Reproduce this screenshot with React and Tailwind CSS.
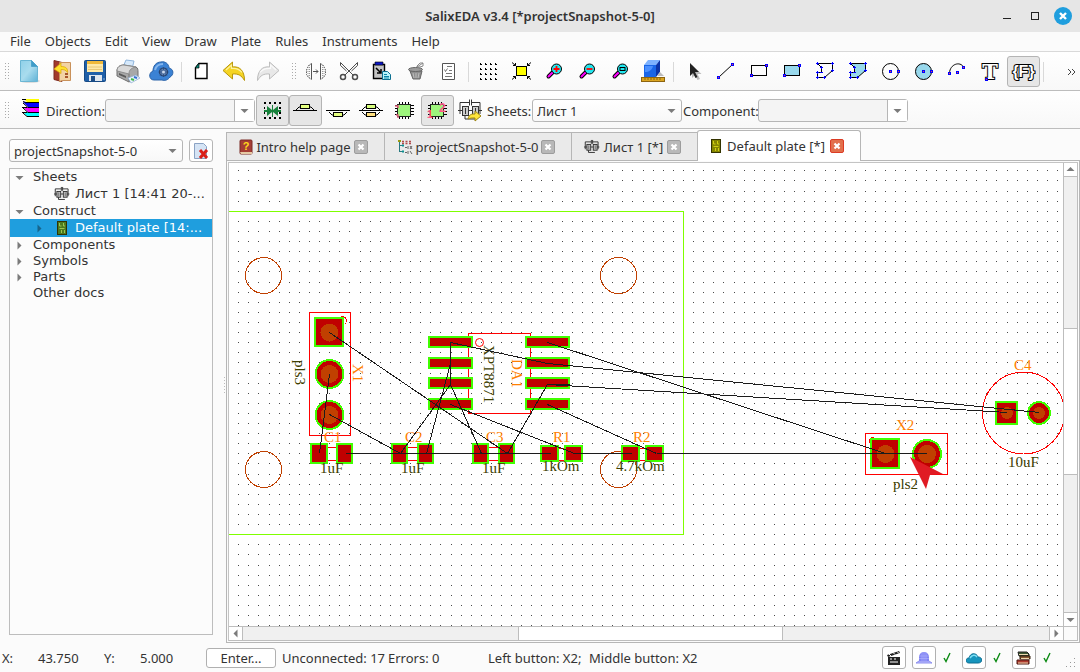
import { useState } from 'react'
import clsx from 'clsx'

const MENU = ['File', 'Objects', 'Edit', 'View', 'Draw', 'Plate', 'Rules', 'Instruments', 'Help']

function Icon({ children, className = '' }) {
  return (
    <svg width="25" height="25" viewBox="0 0 25 25" fill="none" className={clsx('shrink-0', className)} aria-hidden="true">
      {children}
    </svg>
  )
}

/* ---------- file icons ---------- */

const NewIcon = () => (
  <Icon>
    <defs>
      <linearGradient id="newDoc" x1="0" y1="0" x2="1" y2="1">
        <stop offset="0" stopColor="#8fd0e8" />
        <stop offset=".5" stopColor="#a9dcee" />
        <stop offset="1" stopColor="#5fb2d6" />
      </linearGradient>
    </defs>
    <ellipse cx="13" cy="22" rx="10" ry="2" fill="#ddd" />
    <path d="M3.500 1.500h11l6 6v15h-17z" fill="url(#newDoc)" stroke="#6bb6d4" />
    <path d="M14.500 1.500v6h6z" fill="#3f9cc8" stroke="#4ca4cc" />
  </Icon>
)

const OpenIcon = () => (
  <Icon>
    <path d="M4 1.500l8 2v19l-8-2z" fill="#a33a2c" stroke="#7d281e" />
    <path d="M9.500 3.500h11v18h-8l-3 1z" fill="#f2d3a4" stroke="#c9915a" />
    <path d="M15 15h3M15 18h3" stroke="#a8552c" strokeWidth="2" />
    <path d="M4 10l7-6v3.500c5 0 7 2 6.500 6-1.500-2.500-3.500-3-6.500-3v4z" fill="#ffe12e" stroke="#d9a400" strokeWidth=".7" />
  </Icon>
)

const SaveIcon = () => (
  <Icon>
    <rect x="1.500" y="1.500" width="21" height="21" rx="1" fill="#1f5fa8" stroke="#174a85" />
    <rect x="4" y="2" width="16" height="11" fill="#ffe9a8" />
    <rect x="4" y="2" width="16" height="3" fill="#f0b93a" />
    <path d="M5 8h14M5 10.500h14" stroke="#e8c878" />
    <rect x="6" y="16" width="13" height="6" fill="#dfe6ef" />
    <rect x="8" y="17" width="4" height="5" fill="#1c4d87" />
    <path d="M20.500 20h1" stroke="#fff" />
  </Icon>
)

const PrintIcon = () => (
  <Icon>
    <path d="M7 8l3-7 8 1-2 8z" fill="#d6e9fb" stroke="#8fb5dc" />
    <path d="M1 12c0-4 3-6 7-6l12 2c2 1 2 3 2 5v5l-9 5-12-6z" fill="#a8a8a8" stroke="#6f6f6f" />
    <path d="M1 12c0-4 3-6 7-6l12 2c-5 1-7 3-7 7z" fill="#d9d9d9" stroke="#8c8c8c" />
    <path d="M13 15v8" stroke="#777" />
    <path d="M3 14l7 3v2l-7-3z" fill="#5a5a5a" />
    <path d="M12 19l8-3 4 3-9 5z" fill="#eef6ff" stroke="#89a9cf" strokeWidth=".7" />
    <path d="M15 20l3 1" stroke="#44b84a" strokeWidth="2" />
    <path d="M18 18l3 1" stroke="#3070d0" strokeWidth="2" />
  </Icon>
)

const CloudIcon = () => (
  <Icon>
    <path d="M5 21C0 21-1 14 4 12 4 7 7 3 12 3c4-1 8 2 8 6 5 1 5 7 1 9-2 3-5 4-8 3z" fill="#3b82d4" stroke="#2a62a8" />
    <path d="M6 11c1-4 4-6 8-6" stroke="#84b6ee" strokeWidth="2" />
    <circle cx="14.500" cy="13" r="4" fill="#5f83b4" stroke="#24406c" strokeWidth="1.200" />
    <path d="M14.500 8v10M9.500 13h10M11 9.500l7 7M18 9.500l-7 7" stroke="#2b4a7c" strokeWidth=".8" />
    <circle cx="14.500" cy="13" r="1.500" fill="#c8d8ee" />
  </Icon>
)

const PageIcon = () => (
  <Icon>
    <path d="M10 4.500h8v15H6.500V9z" fill="#fff" stroke="#000" strokeWidth="1.400" />
    <path d="M10 4v5H6z" fill="#0b8a7a" stroke="#000" strokeWidth=".7" />
  </Icon>
)

const arrowPath = 'M1 11.500L10.500 3v5c7-1 12 3.500 12 13.500-3-5-6-7-12-6.500v5z'
const UndoIcon = () => (
  <Icon>
    <path d={arrowPath} fill="#f5d423" stroke="#b8960c" />
    <path d="M4 11l5.500-5v3.500c5-.5 8.500 1.500 10.500 4" stroke="#fdf2a0" strokeWidth="1.200" />
  </Icon>
)
const RedoIcon = () => (
  <Icon className="-scale-x-100">
    <path d={arrowPath} fill="#e8e8e8" stroke="#bcbcbc" />
    <path d="M4 11l5.500-5v3.500c5-.5 8.500 1.500 10.500 4" stroke="#fafafa" strokeWidth="1.200" />
  </Icon>
)

/* ---------- edit icons ---------- */

const JoinIcon = () => (
  <Icon>
    <path d="M7.500 4.500v16M16.500 4.500v16" stroke="#555" />
    <path d="M7.500 4.500l-3 2-2 4v5l2 3 3 2M16.500 4.500l3 2 2 4v5l-2 3-3 2" stroke="#555" strokeDasharray="1.500 1" />
    <path d="M4 8v9M5.500 6v13M20 8v9M18.500 6v13" stroke="#999" strokeDasharray="1 1" />
    <path d="M9 12.500h5M12 10.500l2 2-2 2" stroke="#555" />
  </Icon>
)

const CutIcon = () => (
  <Icon>
    <path d="M3.500 3.500L16 16M20.500 3.500L8 16M3.500 3.500v3l6 5.500M20.500 3.500v3l-6 5.500" stroke="#4d4d4d" />
    <circle cx="6" cy="18" r="2.500" stroke="#4d4d4d" strokeWidth="1.500" />
    <circle cx="18" cy="18" r="2.500" stroke="#4d4d4d" strokeWidth="1.500" />
  </Icon>
)

const PasteIcon = () => (
  <Icon>
    <path d="M3.500 5.500h11v14h-11z" fill="#c4c4c4" stroke="#000" strokeWidth="1.400" />
    <path d="M5 3h8v3H5z" fill="#0d18c8" stroke="#000" strokeWidth=".6" />
    <path d="M6 9l5 5M11 10v4H7" stroke="#000" strokeWidth="1.500" />
    <path d="M12.500 12.500h5l3 3v5h-8z" fill="#b8f4fa" stroke="#0c6f90" />
    <path d="M14 15.500h3M14 17.500h5M14 19h5" stroke="#0a86a8" />
  </Icon>
)

const TrashIcon = () => (
  <Icon>
    <path d="M7 12h12l-2 8h-7z" fill="#8f8f8f" stroke="#666" />
    <ellipse cx="12.500" cy="10.500" rx="7" ry="2" fill="#9c9c9c" stroke="#666" />
    <path d="M10 14l1 5M13 14v5M16 14l-1 5" stroke="#bcbcbc" />
    <path d="M14 7l3-3h3v3l-3 1h-3zM14 8l6-4" fill="#fff" stroke="#888" />
  </Icon>
)

const PropsIcon = () => (
  <Icon>
    <path d="M6.500 4.500h12v16h-12z" fill="#fff" stroke="#555" />
    <path d="M11 7.500h5M13 11.500h3M10 14.500h6M9 17.500h7" stroke="#777" />
    <path d="M8.500 10.500l1 2 2-3" stroke="#555" strokeWidth=".8" />
  </Icon>
)

/* ---------- view icons ---------- */

const GridIcon = () => (
  <Icon>
    {[4, 9, 14, 19].map((y) =>
      [4, 9, 14, 19].map((x) => <path key={x + '-' + y} d={`M${x} ${y}h1v1h1v1h-2z`} fill="#000" />)
    )}
  </Icon>
)

const FitIcon = () => (
  <Icon>
    <rect x="7.500" y="7.500" width="10" height="9" fill="#ffff00" stroke="#000" />
    <path d="M3 3.500l3.500 3M22 3.500l-3.500 3M3 20.500l3.500-3M22 20.500l-3.500-3M6.500 4v2.500H4M18.500 4v2.500H21M6.500 20v-2.500H4M18.500 20v-2.500H21" stroke="#000" />
  </Icon>
)

function LensIcon({ sign }) {
  return (
    <Icon>
      <path d="M6.500 17.500l4-4" stroke="#000" strokeWidth="4" strokeLinecap="round" />
      <path d="M6.500 17.500l4-4" stroke="#ff00ff" strokeWidth="2" strokeLinecap="round" />
      <circle cx="14.500" cy="10" r="5" fill="#21e6ee" stroke="#000" />
      {sign === 'fit' ? (
        <rect x="12" y="8.500" width="5" height="3" fill="#21e6ee" stroke="#000" />
      ) : (
        <path d={sign === 'in' ? 'M11.500 10h6M14.500 7v6' : 'M11.500 10h6'} stroke="#f00" strokeWidth="1.800" />
      )}
    </Icon>
  )
}

const CubeIcon = () => (
  <Icon>
    <path d="M3 6h12v12H3z" fill="#1a66e8" />
    <path d="M3 6l4-5h12l-4 5z" fill="#7db2ff" />
    <path d="M15 6l4-5v12l-4 5z" fill="#0c34a8" />
    <path d="M4 7h8c-1 4-4 6-8 6z" fill="#4b90ff" />
    <path d="M19 13l4 4h-7z" fill="#bbb" />
    <rect x=".5" y="18.500" width="23" height="4" fill="#dba521" stroke="#8d6410" />
    <path d="M4 19v2M7 19v2M10 19v2M13 19v2M16 19v2M19 19v2" stroke="#7a5408" strokeWidth=".8" />
  </Icon>
)

/* ---------- drawing tools ---------- */

// Узел фигуры: красная точка в синей рамке
function Node({ x, y }) {
  return (
    <>
      <rect x={x - 1} y={y - 1} width="3" height="3" fill="#0000ff" />
      <rect x={x} y={y} width="1" height="1" fill="#ff4040" />
    </>
  )
}

const CursorIcon = () => (
  <Icon>
    <path d="M11 6v13l3-3 2.500 5 2.500-1-2.500-5h4z" fill="#bbb" />
    <path d="M9 4v13l3-3 2.500 5 2-1-2.500-5h4z" fill="#222" />
  </Icon>
)

const LineIcon = () => (
  <Icon>
    <path d="M5 18L19 5" stroke="#000" />
    <Node x={4} y={18} />
    <Node x={18} y={5} />
  </Icon>
)

function RectIcon({ fill }) {
  return (
    <Icon>
      <rect x="4.500" y="6.500" width="15" height="10" fill={fill} stroke="#000" />
      <Node x={4} y={16} />
      <Node x={19} y={6} />
    </Icon>
  )
}

function PolyIcon({ fill }) {
  return (
    <Icon>
      <path d="M4.500 4.500h15v7l-8 7h-7v-5h4v-5z" fill={fill} stroke="#000" />
      <path d="M3 4.500h3M4.500 3v3M18 4.500h3M19.500 3v3M18 11.500h3M19.500 10v3M10 18.500h3M11.500 17v3M3 18.500h3M4.500 17v3M3 13.500h3M4.500 12v3M7 13.500h3M7 8.500h3M8.500 7v3" stroke="#0000ff" />
    </Icon>
  )
}

function CircleIcon({ fill }) {
  return (
    <Icon>
      <circle cx="11.500" cy="12.500" r="8" fill={fill} stroke="#000" />
      <Node x={11} y={12} />
      <Node x={19} y={12} />
    </Icon>
  )
}

const ArcIcon = () => (
  <Icon>
    <path d="M4.500 14C5 5 15 2 18.500 8" stroke="#000" />
    <Node x={4} y={14} />
    <Node x={12} y={13} />
    <Node x={18} y={8} />
  </Icon>
)

const TextIcon = () => (
  <Icon>
    <text x="12" y="20" textAnchor="middle" fill="#fff" stroke="#000" strokeWidth="2" paintOrder="stroke" className="font-['DejaVu_Serif'] text-[21px] font-bold">T</text>
    <Node x={8} y={20} />
  </Icon>
)

const FunctionIcon = () => (
  <Icon>
    <text x="12.500" y="18" textAnchor="middle" fill="#fff" stroke="#000" strokeWidth="2" paintOrder="stroke" className="font-['Liberation_Sans'] text-[16px] font-bold">{'{F}'}</text>
  </Icon>
)

/* ---------- plate icons ---------- */

const LayersIcon = () => (
  <Icon>
    <path d="M5 1h15v3H8z" fill="#ffff00" />
    <path d="M4 4h16v5H9z" fill="#0000ff" />
    <path d="M4 9h16v5H9z" fill="#ff00ff" />
    <path d="M4 14h16v5H9z" fill="#00ffff" />
    <path d="M3 1.500h4M4 3.500l3 1h13M4 5l5 4.500h11M3 9.500h5M4 10l5 4.500h11M3 14.500h5M4 15l4 3.500h12" stroke="#000" />
  </Icon>
)

const SnapIcon = () => (
  <Icon>
    <path d="M4 4h2v2h-2zM9 4h2v2h-2zM14 4h2v2h-2zM19 4h2v2h-2zM4 9h1v2h-1zM19 9h2v2h-2zM4 14h1v2h-1zM19 14h2v2h-2zM4 19h2v2h-2zM9 19h2v2h-2zM14 19h2v2h-2zM19 19h2v2h-2z" fill="#000" />
    <path d="M7 8l5 4V7h1v5l5-4v10l-5-4v5h-1v-5l-5 4v-4H4v-2h3zM18 12h3v2h-3z" fill="#16803a" />
  </Icon>
)

const topPart = 'M0 12.500h24M3 12l3-3h2M21 12l-3-3h-2'
const botPart = 'M3 14l3 3h2M21 14l-3 3h-2'
const TopSideIcon = () => (
  <Icon>
    <path d={topPart} stroke="#000" />
    <rect x="7.500" y="6.500" width="9" height="4" fill="#e4ff80" stroke="#000" />
  </Icon>
)
const BottomSideIcon = () => (
  <Icon>
    <path d={'M0 12.500h24' + botPart} stroke="#000" />
    <rect x="7.500" y="14.500" width="9" height="4" fill="#e4ff80" stroke="#000" />
  </Icon>
)
const BothSidesIcon = () => (
  <Icon>
    <path d={topPart + botPart} stroke="#000" />
    <rect x="7.500" y="6.500" width="9" height="4" fill="#d8ff80" stroke="#000" />
    <rect x="7.500" y="14.500" width="9" height="4" fill="#ffe080" stroke="#000" />
  </Icon>
)

function ChipIcon({ marked }) {
  return (
    <Icon>
      <path d="M7.500 4v17M10.500 4v17M13.500 4v17M16.500 4v17M3 7.500h19M3 10.500h19M3 13.500h19M3 16.500h19" stroke="#000" />
      <rect x="5.500" y="6.500" width="13" height="12" fill="#9df57c" stroke="#222" />
      {marked ? (
        <g fill="#ff5c8a" className="font-['Liberation_Sans'] font-bold">
          <text x="2" y="20" className="text-[10px]">1</text>
          <text x="14" y="14" className="text-[12px]">2</text>
        </g>
      ) : (
        <path d="M3 8h3v2M4 17h2v3" stroke="#e0607c" strokeWidth="1.500" />
      )}
    </Icon>
  )
}

const CircuitIcon = ({ arrow, size = 25 }) => (
  <svg width={size} height={size} viewBox="0 0 25 25" fill="none" className="shrink-0" aria-hidden="true">
    <path d="M2 16V4.500h9M13 4.500h9V16M11.500 1.500v6M13.500 1.500v6M0 12.500h24M7 21h10M7 17v4" stroke="#333" strokeWidth={arrow ? 1 : 1.5} />
    <rect x="4.500" y="8.500" width="6" height="9" fill="#ccc" stroke="#333" strokeWidth={arrow ? 1 : 1.5} />
    <rect x="14.500" y="8.500" width="6" height="9" fill="#ccc" stroke="#333" strokeWidth={arrow ? 1 : 1.5} />
    <path d="M7.500 10v6M17.500 10v6" stroke="#333" />
    {arrow && <path d="M10 21c1-5 4-5 7-5v-3l6 5-6 5v-3c-3 0-5 0-7 1z" fill="#ffe53b" stroke="#9c8412" />}
  </svg>
)

/* ---------- tab and tree icons ---------- */

const HelpBookIcon = () => (
  <svg width="14" height="16" viewBox="0 0 14 16" className="shrink-0" aria-hidden="true">
    <rect x="1" y="1" width="12" height="14" rx="1" fill="#a53d35" stroke="#7a2a24" />
    <path d="M1 13h12v2H2z" fill="#e5c9a4" />
    <text x="7" y="11" textAnchor="middle" fill="#ffd91a" className="font-['Liberation_Sans'] text-[11px] font-bold">?</text>
  </svg>
)

const ProjectIcon = () => (
  <svg width="16" height="16" viewBox="0 0 16 16" fill="none" className="shrink-0" aria-hidden="true">
    <path d="M2.500 3v10M3 6.500h4M3 12.500h4" stroke="#2a7a80" />
    <path d="M5 2.500h2M8.500 2.500h2M12 2.500h2M5 4.500h2M8.500 4.500h2M12 4.500h2" stroke="#b04a4a" strokeWidth="1.500" />
    <path d="M8 8.500h2M11 7v3M13 7l2 3M15 7l-2 3M8 13.500h2M11 12v3M13 12l2 3" stroke="#666" />
    <path d="M5 6.500h2M5 12.500h2" stroke="#0b9090" strokeWidth="2" />
    <rect x="1" y="1" width="3" height="2" fill="#9a9a10" />
  </svg>
)

const PlateIcon = ({ bg = '#868600', trace = '#d0d010' }) => (
  <svg width="12" height="14" viewBox="0 0 12 14" fill="none" className="shrink-0" aria-hidden="true">
    <rect x="1.500" y=".5" width="9" height="13" fill={bg} stroke="#333300" />
    <path d="M3.500 2v3h2M7.500 2v3h1.500M3.500 7.500h5M5.500 9v3M8.500 9v3" stroke={trace} />
  </svg>
)

function CloseBox({ active }) {
  return (
    <svg width="14" height="14" viewBox="0 0 14 14" className="shrink-0" aria-hidden="true">
      <rect x=".5" y=".5" width="13" height="13" rx="1.500" fill={active ? '#e2704c' : '#b8b8b8'} stroke={active ? '#dc3b24' : '#9c9c9c'} />
      <path d="M4.500 4.500l5 5M9.500 4.500l-5 5" stroke="#fff" strokeWidth="2.200" />
    </svg>
  )
}

function Arrow({ dir = 'down', className = '' }) {
  const d = { down: 'M.5 3h8l-4 4z', up: 'M.5 6h8l-4-4z', left: 'M6.500 .5v8l-4-4z', right: 'M2.500 .5v8l4-4z' }[dir]
  return (
    <svg width="9" height="9" viewBox="0 0 9 9" className={clsx('shrink-0', className)} aria-hidden="true">
      <path d={d} fill="#7b7b7b" />
    </svg>
  )
}

/* ---------- controls ---------- */

function ToolButton({ title, pressed, children }) {
  return (
    <button
      type="button"
      title={title}
      aria-label={title}
      className={clsx(
        'flex h-[31px] w-[33px] shrink-0 items-center justify-center rounded-[3px]',
        pressed && 'border border-[#b4b4b4] bg-[#e6e6e6]'
      )}
    >
      {children}
    </button>
  )
}

function Handle({ className = '' }) {
  return (
    <svg width="5" height="18" className={clsx('shrink-0', className)} aria-hidden="true">
      {[0, 3, 6, 9, 12, 15].map((y) => (
        <path key={y} d={`M0 ${y}h1v1h-1zM3 ${y}h1v1h-1z`} fill="#aaa" />
      ))}
    </svg>
  )
}

const Separator = () => <span className="mx-[3px] h-5 w-px shrink-0 bg-[#d9d9d9]" />

function Combo({ id, label, value = '', split, className }) {
  return (
    <span className={clsx('relative block h-[23px] shrink-0', className)}>
      <select
        id={id}
        aria-label={label}
        defaultValue={value}
        className={clsx(
          'block h-full w-full appearance-none rounded-[3px] border border-[#b6b6b6] pl-1 pr-6 text-[13px] leading-5 text-[#333] outline-none',
          split ? 'bg-[#f4f4f4]' : 'bg-linear-to-b from-white to-[#f8f8f8]'
        )}
      >
        <option>{value}</option>
      </select>
      <span
        className={clsx(
          'pointer-events-none absolute inset-y-px right-px flex w-5 items-center justify-center',
          split && 'border-l border-[#b6b6b6] bg-white'
        )}
      >
        <Arrow />
      </span>
    </span>
  )
}

/* ---------- tree ---------- */

const TREE = [
  { text: 'Sheets', open: true },
  { text: 'Лист 1 [14:41 20-...', icon: 'sheet' },
  { text: 'Construct', open: true },
  { text: 'Default plate [14:...', icon: 'plate', selected: true },
  { text: 'Components', open: false },
  { text: 'Symbols', open: false },
  { text: 'Parts', open: false },
  { text: 'Other docs' }
]

function ProjectTree() {
  return (
    <ul role="tree" className="mt-1.5 min-h-0 flex-1 overflow-hidden border border-[#bdbdbd] bg-[#fcfcfc] font-['DejaVu_Sans',sans-serif] text-[13px] text-[#333]">
      {TREE.map((row) => (
        <li
          key={row.text}
          role="treeitem"
          aria-selected={!!row.selected}
          className={clsx(
            'flex items-center whitespace-nowrap',
            row.icon ? 'h-[18px]' : 'h-4',
            row.icon && (row.selected ? 'bg-[#1f9ede] pl-[25px] text-white' : 'pl-[25px]'),
            !row.icon && 'pl-[5px]'
          )}
        >
          <span className="flex w-[18px] shrink-0">
            {row.open !== undefined && <Arrow dir={row.open ? 'down' : 'right'} />}
            {row.selected && (
              <svg width="9" height="9" viewBox="0 0 9 9" aria-hidden="true">
                <path d="M2.500 .5v8l4-4z" fill="#17648c" />
              </svg>
            )}
          </span>
          {row.icon && (
            <span className="mr-1 flex w-[18px] shrink-0 justify-center">
              {row.icon === 'sheet' ? <CircuitIcon size={16} /> : <PlateIcon bg="#4c7a1e" trace="#9cc452" />}
            </span>
          )}
          {row.text}
        </li>
      ))}
    </ul>
  )
}

/* ---------- board ---------- */

const GRID = (() => {
  let d = ''
  for (let j = 0; j < 100; j++) {
    for (let i = 0; i < 200; i++) {
      d += `M${Math.floor(9.7 + i * 10.11)} ${Math.floor(7.800 + j * 10.11)}h1v1h-1z`
    }
  }
  return d
})()

// Контактные площадки: x, y, ширина, высота
const PADS = [
  [314, 317, 30, 30],
  [428, 336, 45, 12], [428, 357, 45, 12], [428, 377, 45, 12], [428, 398, 45, 12],
  [525, 336, 45, 12], [525, 357, 45, 12], [525, 377, 45, 12], [525, 398, 45, 12],
  [310, 443, 18, 21], [336, 443, 17, 21],
  [391, 443, 17, 21], [417, 443, 17, 21],
  [472, 443, 17, 21], [498, 443, 17, 21],
  [540, 445, 19, 17], [564, 445, 19, 17],
  [621, 445, 19, 17], [645, 445, 19, 17],
  [870, 438, 30, 31],
  [995, 401, 23, 24]
]

const ROUND_PADS = [[329.5, 374, 15], [329.5, 415, 15], [927, 454, 15], [1039, 413, 12]]
const HOLES = [[329.5, 332.5, 9], [329.5, 374, 9], [329.5, 415, 9], [885.5, 454, 9], [927, 454, 9], [1007, 413, 6], [1039, 413, 6]]

// Несоединённые связи
const LINKS = [
  [329, 332, 507, 453], [329, 374, 319, 453], [329, 414, 400, 453],
  [345, 453, 550, 453], [573, 453, 631, 453], [656, 453, 926, 453],
  [400, 453, 450, 384], [426, 453, 450, 363], [450, 342, 450, 384],
  [450, 384, 481, 453], [450, 342, 547, 363], [547, 363, 1039, 412],
  [547, 384, 1007, 412], [450, 404, 574, 453], [547, 404, 656, 453],
  [547, 342, 885, 453], [547, 384, 507, 453], [547, 384, 569, 384]
]

const LABELS = [
  ['C1', 324, 442, 1], ['1uF', 320, 473, 0],
  ['C2', 405, 442, 1], ['1uF', 401, 473, 0],
  ['C3', 486, 442, 1], ['1uF', 482, 473, 0],
  ['R1', 553, 442, 1], ['1kOm', 542, 471, 0],
  ['R2', 633, 442, 1], ['4.7kOm', 616, 471, 0],
  ['C4', 1014, 370, 1], ['10uF', 1008, 467, 0],
  ['X2', 896, 430, 1], ['pls2', 893, 489, 0],
  ['X1', 353, 364, 1, true], ['pls3', 295, 360, 0, true],
  ['XPT8871', 484, 345, 0, true], ['DA1', 512, 359, 1, true]
]

function Board() {
  return (
    <svg className="block h-full w-full bg-white" shapeRendering="crispEdges" role="img" aria-label="Default plate">
      <path d={GRID} fill="#4a4a4a" />
      <g transform="translate(-229 -163)" fill="none">
        <path d="M229 211.500h454.500v323H229" stroke="#7fff00" />
        {[[263, 275], [618, 275], [263, 469], [618, 469]].map(([x, y]) => (
          <circle key={x + '-' + y} cx={x + 0.5} cy={y + 0.5} r="18" stroke="#c04000" />
        ))}
        <g stroke="#ff0000">
          <rect x="309.500" y="312.500" width="41" height="123" />
          <circle cx="342.500" cy="320.500" r="4" />
          <rect x="468.500" y="333.500" width="62" height="80" />
          <circle cx="479.500" cy="342.500" r="4" shapeRendering="auto" />
          <path d="M328 447.500h8M328 460.500h8M408 447.500h9M408 460.500h9M489 447.500h9M489 460.500h9M559 448.500h5M559 460.500h5M640 448.500h5M640 460.500h5" />
          <rect x="865.500" y="433.500" width="82" height="41" />
          <circle cx="872.500" cy="440.500" r="3" />
          <circle cx="1023.500" cy="413" r="41" />
        </g>
        <g fill="#c00000" stroke="#40ff00" strokeWidth="2">
          {PADS.map(([x, y, w, h]) => (
            <rect key={x + '-' + y} x={x + 1} y={y + 1} width={w - 2} height={h - 2} />
          ))}
          {ROUND_PADS.map(([x, y, r]) => (
            <circle key={x + '-' + y} cx={x} cy={y} r={r - 1} />
          ))}
        </g>
        {HOLES.map(([x, y, r]) => (
          <circle key={x + '-' + y} cx={x} cy={y} r={r} fill="#c04000" />
        ))}
        <g className="font-['Liberation_Serif',serif] text-[15px]">
          {LABELS.map(([text, x, y, isName, turned]) => (
            <text key={text + x} fill={isName ? '#ff8000' : '#404000'} transform={`translate(${x} ${y})${turned ? ' rotate(90)' : ''}`}>
              {text}
            </text>
          ))}
        </g>
        <g stroke="#1c1c1c">
          {LINKS.map(([x1, y1, x2, y2], i) => (
            <line key={i} x1={x1 + 0.5} y1={y1 + 0.5} x2={x2 + 0.5} y2={y2 + 0.5} />
          ))}
        </g>
        <path d="M910 457l33 17-13 1-4 14z" fill="#e01b24" shapeRendering="auto" />
      </g>
    </svg>
  )
}

function ScrollBar({ vertical }) {
  const line = vertical ? 'border-y' : 'border-x'
  return (
    <div className={clsx('flex bg-[#f0f0f0] border-[#bdbdbd]', vertical ? 'w-[15px] flex-col border-x' : 'h-[15px] border-y')}>
      <button type="button" aria-label={vertical ? 'Up' : 'Left'} className={clsx('flex shrink-0 items-center justify-center bg-white border-[#bdbdbd]', vertical ? 'h-[14px] border-b' : 'w-[14px] border-r')}>
        <Arrow dir={vertical ? 'up' : 'left'} />
      </button>
      <span className={vertical ? 'basis-0 grow-[152]' : 'basis-0 grow-[276]'} />
      <span className={clsx('border-[#bdbdbd] bg-white', line, vertical ? 'basis-0 grow-[146]' : 'basis-0 grow-[263]')} />
      <span className={vertical ? 'basis-0 grow-[138]' : 'basis-0 grow-[267]'} />
      <button type="button" aria-label={vertical ? 'Down' : 'Right'} className={clsx('flex shrink-0 items-center justify-center bg-white border-[#bdbdbd]', vertical ? 'h-[14px] border-t' : 'w-[14px] border-l')}>
        <Arrow dir={vertical ? 'down' : 'right'} />
      </button>
    </div>
  )
}

const TABS = [
  { id: 'help', text: 'Intro help page', icon: <HelpBookIcon />, width: 'w-[158px]' },
  { id: 'project', text: 'projectSnapshot-5-0', icon: <ProjectIcon />, width: 'w-[187px]' },
  { id: 'sheet', text: 'Лист 1 [*]', icon: <CircuitIcon size={16} />, width: 'w-[126px]' },
  { id: 'plate', text: 'Default plate [*]', icon: <PlateIcon />, width: 'w-[164px]' }
]

function TabBar() {
  const [tab, setTab] = useState('plate')
  return (
    <div role="tablist" className="flex h-[30px] items-end">
      {TABS.map((t) => {
        const active = t.id === tab
        return (
          <button
            key={t.id}
            type="button"
            role="tab"
            aria-selected={active}
            onClick={() => setTab(t.id)}
            className={clsx(
              'flex items-center justify-between whitespace-nowrap border-t border-l border-[#b6b6b6] pl-3 pr-4 last:border-r',
              t.width,
              active ? 'relative z-10 -mb-px h-[31px] rounded-t-[3px] bg-white' : 'h-7 bg-[#eaeaea]'
            )}
          >
            {t.icon}
            <span>{t.text}</span>
            <CloseBox active={active} />
          </button>
        )
      })}
    </div>
  )
}

/* ---------- status bar ---------- */

function StatusButton({ title, children }) {
  return (
    <button type="button" title={title} aria-label={title} className="flex h-[23px] w-6 shrink-0 items-center justify-center rounded-[3px] border border-[#b0b0b0] bg-white">
      {children}
    </button>
  )
}

const Check = () => (
  <svg width="26" height="12" viewBox="0 0 26 12" fill="none" className="shrink-0" aria-hidden="true">
    <path d="M8 6l2 3.500L14 1" stroke="#0a8a12" strokeWidth="1.400" />
  </svg>
)

const small = { width: 16, height: 16, viewBox: '0 0 16 16', fill: 'none', 'aria-hidden': true }

function StatusBar() {
  return (
    <footer className="flex h-[29px] shrink-0 items-center whitespace-nowrap pl-0.5">
      <span className="w-9">X:</span>
      <span className="w-[66px]">43.750</span>
      <span className="w-9">Y:</span>
      <span className="w-[66px]">5.000</span>
      <button type="button" className="flex h-5 w-[70px] items-center justify-center rounded-[3px] border border-[#b0b0b0] bg-white">Enter...</button>
      <span className="ml-1.5 w-[106px]">Unconnected: 17</span>
      <span className="w-[100px]">Errors: 0</span>
      <span className="w-[101px]">Left button: X2;</span>
      <span>Middle button: X2</span>
      <div className="ml-auto flex items-center">
        <StatusButton title="Record">
          <svg {...small}>
            <path d="M2 7h12v8H2z" fill="#222" />
            <path d="M1 5l12-4 1 2L2 7z" fill="#222" />
            <path d="M3 4l2 2M7 2.500l2 2M11 1.500l2 2M4 9h2M8 9h2M4 12h8" stroke="#fff" />
          </svg>
        </StatusButton>
        <span className="w-1.5" />
        <StatusButton title="Server">
          <svg {...small}>
            <path d="M0 13l3-2h10l3 2z" fill="#b8baff" stroke="#8d90ee" />
            <path d="M3 11V7a5 5 0 0 1 10 0v4z" fill="#8184f2" />
            <path d="M3 6h10M3 8.500h10M6 2v9M8 2v9M10 2v9" stroke="#b4b7ff" strokeWidth=".6" />
          </svg>
        </StatusButton>
        <Check />
        <StatusButton title="Cloud">
          <svg {...small}>
            <path d="M3 13c-4 0-4-5 0-5 1-5 7-6 9-1 5 0 5 6 0 6z" fill="#1795bd" stroke="#0c6e92" />
            <path d="M4 8c2-3 5-4 7-1" stroke="#7fe0f5" strokeWidth="1.500" />
          </svg>
        </StatusButton>
        <Check />
        <StatusButton title="Library">
          <svg {...small}>
            <path d="M2 2h9l2 2v2H3z" fill="#3d5a35" stroke="#222" />
            <path d="M4 6h10v3H4z" fill="#8a5a34" stroke="#33200f" />
            <path d="M1 10h12v4H1z" fill="#b03a2e" stroke="#4a1813" />
            <path d="M3 4.500h9M5 8.500h8M2 13h10" stroke="#ecd9b0" />
          </svg>
        </StatusButton>
        <Check />
        <svg width="18" height="12" className="mt-3 shrink-0" aria-hidden="true">
          {[[12, 0], [8, 4], [12, 4], [4, 8], [8, 8], [12, 8]].map(([x, y]) => (
            <rect key={x + '-' + y} x={x} y={y} width="1" height="1" fill="#999" />
          ))}
        </svg>
      </div>
    </footer>
  )
}

export default function App() {
  return (
    <div className="flex h-screen flex-col overflow-hidden bg-[#fbfbfb] font-['Noto_Sans',sans-serif] text-[13px] leading-5 text-[#333]">
      <header className="relative flex h-8 shrink-0 items-center justify-center bg-[#e6e6e6]">
        <h1 className="text-[13px] font-semibold">SalixEDA v3.4 [*projectSnapshot-5-0]</h1>
        <div className="absolute inset-y-0 right-2 flex items-center">
          <button type="button" aria-label="Minimize" className="flex size-7 items-center justify-center">
            <svg width="10" height="10" aria-hidden="true"><path d="M1 7h8v1H1z" fill="#222" /></svg>
          </button>
          <button type="button" aria-label="Maximize" className="flex size-7 items-center justify-center">
            <span className="size-2 border border-[#222]" />
          </button>
          <button type="button" aria-label="Close" className="ml-[5px] flex size-[18px] items-center justify-center rounded-full bg-[#1f9ede]">
            <svg width="10" height="10" viewBox="0 0 10 10" aria-hidden="true"><path d="M2 2l6 6M8 2l-6 6" stroke="#fff" strokeWidth="2.400" /></svg>
          </button>
        </div>
      </header>

      <nav className="flex h-5 shrink-0 items-center gap-[14px] border-b border-[#d9d9d9] px-2.5 pb-0.5">
        {MENU.map((item) => (
          <button key={item} type="button">{item}</button>
        ))}
      </nav>

      <div className="flex h-[39px] shrink-0 items-start border-b border-[#bdbdbd] bg-linear-to-b from-white to-[#f8f8f8] pt-1">
        <div className="flex h-[31px] items-center">
          <Handle className="ml-[5px] mr-[3px]" />
          <ToolButton title="New"><NewIcon /></ToolButton>
          <ToolButton title="Open"><OpenIcon /></ToolButton>
          <ToolButton title="Save"><SaveIcon /></ToolButton>
          <ToolButton title="Print"><PrintIcon /></ToolButton>
          <ToolButton title="Cloud settings"><CloudIcon /></ToolButton>
          <Separator />
          <ToolButton title="Page"><PageIcon /></ToolButton>
          <ToolButton title="Undo"><UndoIcon /></ToolButton>
          <ToolButton title="Redo"><RedoIcon /></ToolButton>
          <Handle className="ml-2 mr-[3px]" />
          <ToolButton title="Join"><JoinIcon /></ToolButton>
          <ToolButton title="Cut"><CutIcon /></ToolButton>
          <ToolButton title="Paste"><PasteIcon /></ToolButton>
          <ToolButton title="Delete"><TrashIcon /></ToolButton>
          <ToolButton title="Properties"><PropsIcon /></ToolButton>
          <Separator />
          <ToolButton title="Grid"><GridIcon /></ToolButton>
          <ToolButton title="Fit"><FitIcon /></ToolButton>
          <ToolButton title="Zoom in"><LensIcon sign="in" /></ToolButton>
          <ToolButton title="Zoom out"><LensIcon sign="out" /></ToolButton>
          <ToolButton title="Zoom window"><LensIcon sign="fit" /></ToolButton>
          <ToolButton title="3D view"><CubeIcon /></ToolButton>
          <Separator />
          <ToolButton title="Select"><CursorIcon /></ToolButton>
          <ToolButton title="Line"><LineIcon /></ToolButton>
          <ToolButton title="Rectangle"><RectIcon fill="none" /></ToolButton>
          <ToolButton title="Filled rectangle"><RectIcon fill="#98d8ec" /></ToolButton>
          <ToolButton title="Region"><PolyIcon fill="none" /></ToolButton>
          <ToolButton title="Filled region"><PolyIcon fill="#98d8ec" /></ToolButton>
          <ToolButton title="Circle"><CircleIcon fill="none" /></ToolButton>
          <ToolButton title="Filled circle"><CircleIcon fill="#98d8ec" /></ToolButton>
          <ToolButton title="Arc"><ArcIcon /></ToolButton>
          <ToolButton title="Text"><TextIcon /></ToolButton>
          <ToolButton title="Fragment" pressed><FunctionIcon /></ToolButton>
          <Separator />
        </div>
        <button type="button" aria-label="More" className="mr-1 ml-auto flex h-[31px] items-center">
          <svg width="9" height="8" viewBox="0 0 9 8" fill="none" aria-hidden="true"><path d="M1 1l3 3-3 3M5 1l3 3-3 3" stroke="#444" /></svg>
        </button>
      </div>

      <div className="flex h-[38px] shrink-0 items-start border-b border-[#bdbdbd] bg-linear-to-b from-white to-[#f8f8f8] pt-1">
        <div className="flex h-[31px] items-center whitespace-nowrap">
          <Handle className="ml-[5px] mr-[9px]" />
          <LayersIcon />
          <label htmlFor="direction" className="ml-0.5 w-[59px]">Direction:</label>
          <Combo id="direction" split className="w-[150px]" />
          <span className="w-px" />
          <ToolButton title="Snap" pressed><SnapIcon /></ToolButton>
          <ToolButton title="Top side" pressed><TopSideIcon /></ToolButton>
          <ToolButton title="Bottom side"><BottomSideIcon /></ToolButton>
          <ToolButton title="Both sides"><BothSidesIcon /></ToolButton>
          <ToolButton title="Chip"><ChipIcon /></ToolButton>
          <ToolButton title="Pad numbers" pressed><ChipIcon marked /></ToolButton>
          <ToolButton title="From sheet"><CircuitIcon arrow /></ToolButton>
          <label htmlFor="sheets" className="w-[45px]">Sheets:</label>
          <Combo id="sheets" value="Лист 1" className="w-[150px]" />
          <label htmlFor="component" className="w-[76px] pl-px">Component:</label>
          <Combo id="component" split className="w-[150px]" />
        </div>
      </div>

      <main className="flex min-h-0 flex-1">
        <aside className="flex w-[213px] shrink-0 flex-col pt-2.5 pb-2 pl-[9px]">
          <div className="flex shrink-0 justify-between">
            <Combo label="Project" value="projectSnapshot-5-0" className="w-[174px]" />
            <button type="button" aria-label="Close project" className="flex h-[23px] w-6 items-center justify-center rounded-[3px] border border-[#b6b6b6] bg-white">
              <svg width="18" height="18" viewBox="0 0 18 18" fill="none" aria-hidden="true">
                <path d="M2.500 1.500h9l3 3v12h-12z" fill="#d5e4f5" stroke="#8ba3c4" />
                <path d="M8 8l7 8M15 8l-7 8" stroke="#d91e18" strokeWidth="3" />
              </svg>
            </button>
          </div>
          <ProjectTree />
        </aside>

        <div className="flex w-[13px] shrink-0 items-center justify-end pr-px">
          <svg width="1" height="18" aria-hidden="true"><path d="M.5 0v18" stroke="#bbb" strokeDasharray="1 2" /></svg>
        </div>

        <section className="flex min-w-0 flex-1 flex-col pt-px">
          <TabBar />
          <div className="flex min-h-0 flex-1 border border-[#b6b6b6] p-px">
            <div className="grid min-h-0 min-w-0 flex-1 grid-cols-[1fr_auto] grid-rows-[1fr_auto] border-t border-l border-[#c4c4c4]">
              <div className="relative min-h-0 min-w-0 overflow-hidden">
                <div className="absolute inset-0"><Board /></div>
              </div>
              <ScrollBar vertical />
              <ScrollBar />
              <div className="border border-[#bdbdbd] bg-[#fbfbfb]" />
            </div>
          </div>
        </section>
      </main>

      <StatusBar />
    </div>
  )
}
